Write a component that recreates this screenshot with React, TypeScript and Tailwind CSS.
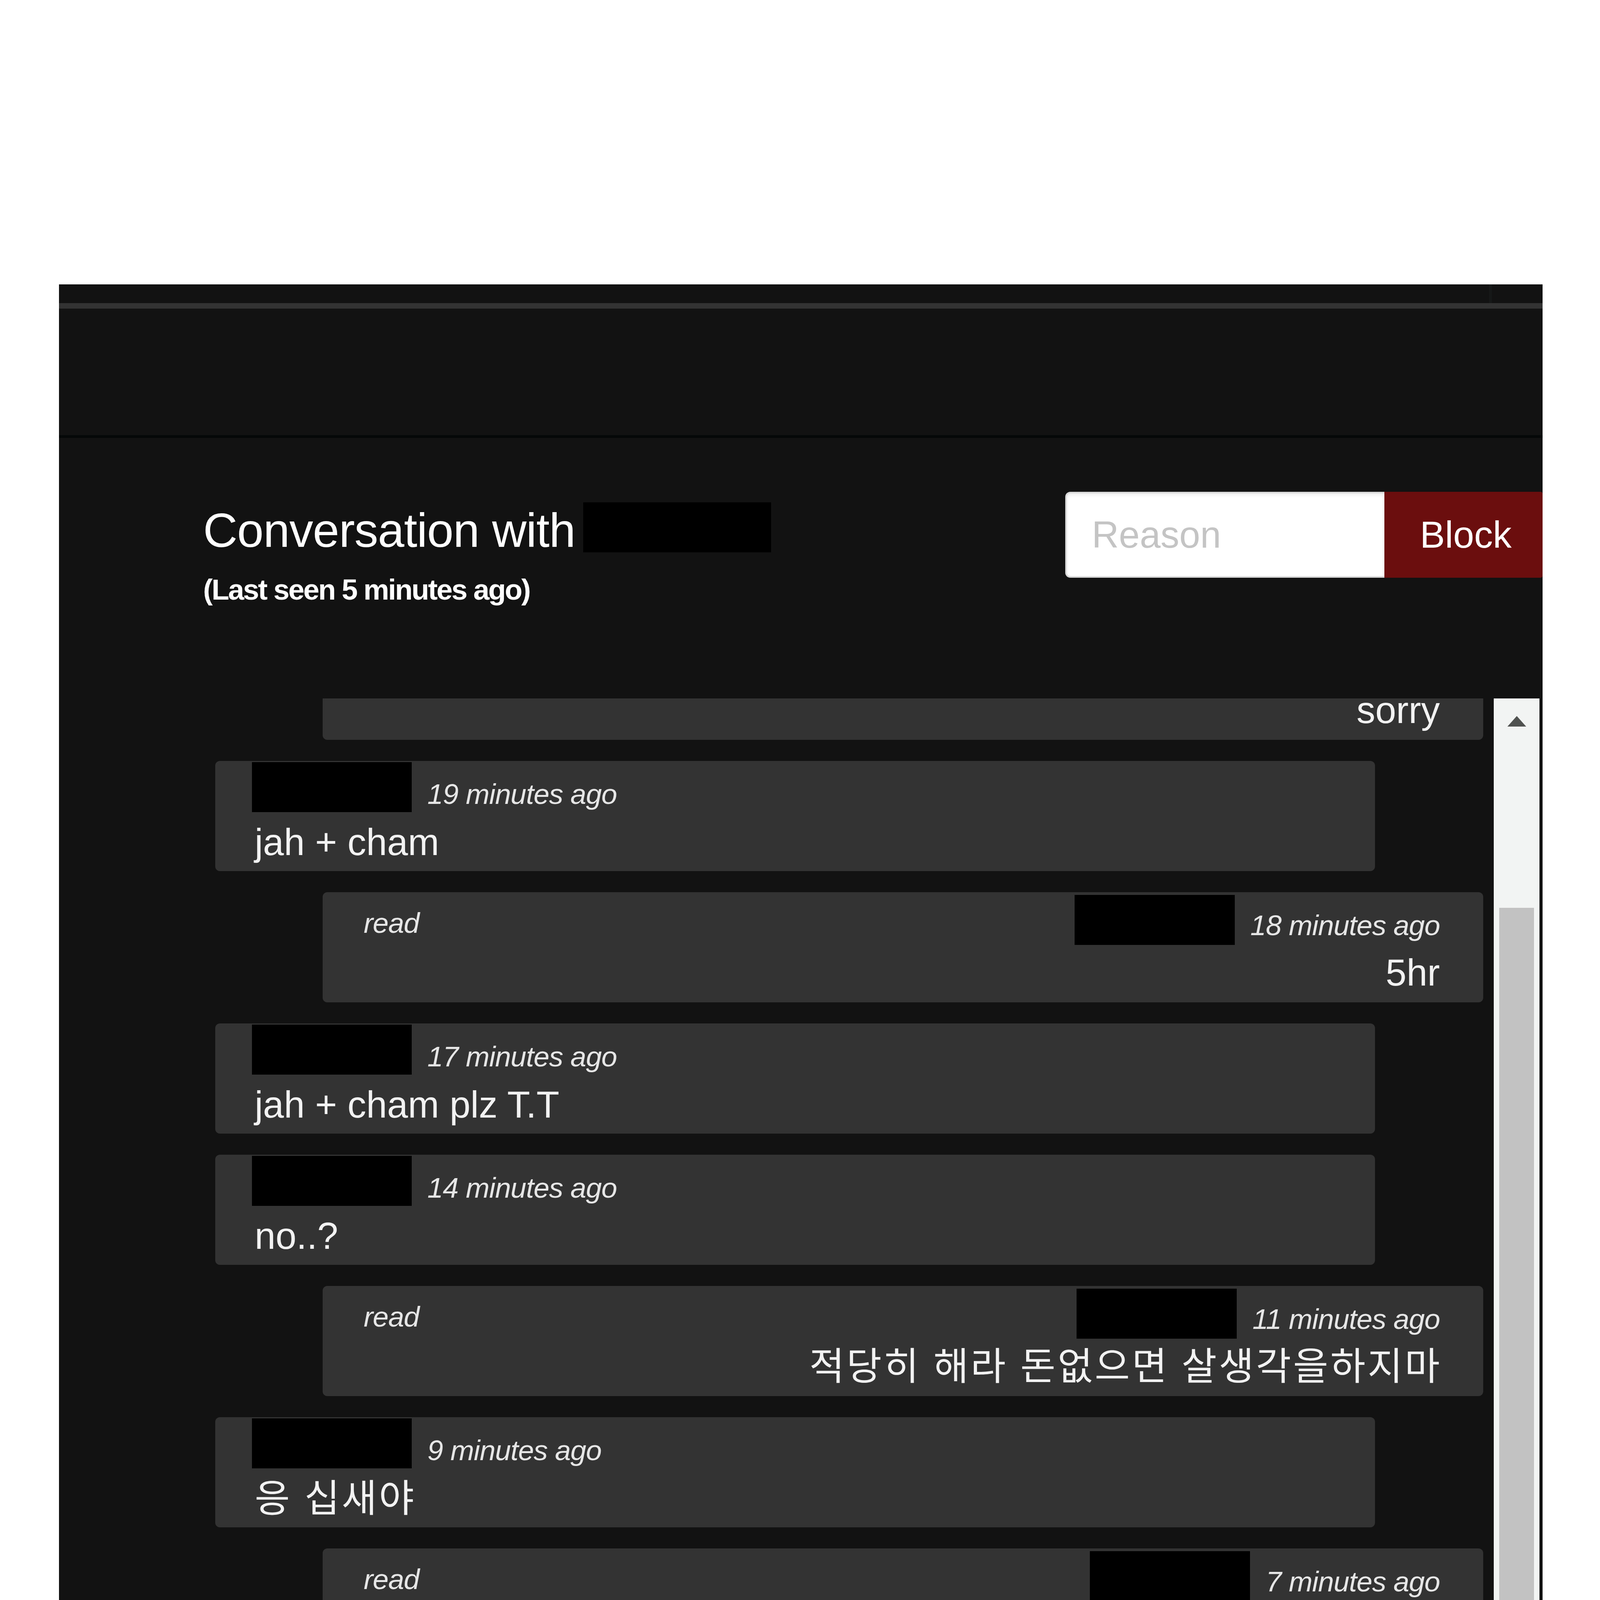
import clsx from 'clsx';

type Msg = {
  side: 'in' | 'out';
  time: string;
  text: string;
  ko?: boolean;
};

const messages: Msg[] = [
  { side: 'out', time: '20 minutes ago', text: 'sorry' },
  { side: 'in', time: '19 minutes ago', text: 'jah + cham' },
  { side: 'out', time: '18 minutes ago', text: '5hr' },
  { side: 'in', time: '17 minutes ago', text: 'jah + cham plz T.T' },
  { side: 'in', time: '14 minutes ago', text: 'no..?' },
  { side: 'out', time: '11 minutes ago', text: '적당히 해라 돈없으면 살생각을하지마', ko: true },
  { side: 'in', time: '9 minutes ago', text: '응 십새야', ko: true },
  { side: 'out', time: '7 minutes ago', text: '그지새끼가 염치가있어야지 ㅋㅋ 새해복은 많이받아라', ko: true },
  { side: 'in', time: '6 minutes ago', text: '응 느금마', ko: true },
  { side: 'in', time: '6 minutes ago', text: '너도 복많이받고 떡국은 챙겨먹어라', ko: true },
];

function Incoming({ m }: { m: Msg }) {
  return (
    <div className="shrink-0 mr-[277px] h-[282px] rounded-[12px] bg-[#333333] pl-[94px] pr-[100px] pt-[3px]">
      <div className="flex items-start">
        {/* redacted name */}
        <div className="w-[409px] h-[128px] bg-black" />
        <span className="ml-[40px] mt-[45px] text-[73px] leading-none italic tracking-[-1px] text-[#e6e6e6]">
          {m.time}
        </span>
      </div>
      <p
        className={clsx(
          'mt-[19px] pl-[7px] leading-[116px] text-[#f2f2f2] whitespace-nowrap',
          m.ko ? 'text-[98px] tracking-[5px]' : 'text-[96px]'
        )}
      >
        {m.text}
      </p>
    </div>
  );
}

function Outgoing({ m }: { m: Msg }) {
  return (
    <div className="shrink-0 ml-[275px] h-[282px] rounded-[12px] bg-[#333333] pl-[105px] pr-[111px] pt-[7px]">
      <div className="flex items-start">
        <span className="mt-[35px] text-[73px] leading-none italic tracking-[-1px] text-[#e6e6e6]">read</span>
        <div className="ml-auto w-[410px] h-[128px] bg-black" />
        <span className="ml-[40px] mt-[41px] text-[73px] leading-none italic tracking-[-1px] text-[#e6e6e6]">
          {m.time}
        </span>
      </div>
      <p
        className={clsx(
          'mt-[13px] text-right leading-[116px] text-[#f2f2f2] whitespace-nowrap',
          m.ko ? 'text-[98px] tracking-[5px] -mr-[5px]' : 'text-[96px]'
        )}
      >
        {m.text}
      </p>
    </div>
  );
}

function Scrollbar() {
  return (
    <div className="w-[117px] h-full flex flex-col bg-[#f2f4f3]">
      <div className="h-[117px] flex items-center justify-center">
        <svg width="48" height="27" viewBox="0 0 48 27">
          <polygon points="0,27 24,0 48,27" fill="#505250" />
        </svg>
      </div>
      <div className="flex-1 flex flex-col pt-[419px] pb-[7px] px-[14px]">
        <div className="flex-1 bg-[#c2c2c2]" />
      </div>
      <div className="h-[117px] flex items-center justify-center">
        <svg width="48" height="27" viewBox="0 0 48 27">
          <polygon points="0,0 48,0 24,27" fill="#505250" />
        </svg>
      </div>
    </div>
  );
}

export default function App() {
  return (
    <div className="w-full h-[5793px] bg-white pt-[728px] font-['Liberation_Sans','Noto_Sans_CJK_KR',sans-serif]">
      <div className="ml-[151px] w-[3798px] bg-[#121212]">
        {/* Top bar */}
        <div className="h-[48px] flex justify-end pr-[130px]">
          <div className="w-[7px] h-full bg-[#161818]" />
        </div>
        <div className="h-[14px] bg-[#333333]" />
        <div className="h-[324px]" />
        <div className="h-[7px] bg-[#050808]" />

        {/* Header */}
        <div className="h-[667px] flex items-start justify-between pl-[369px] pt-[138px]">
          <div className="mt-[27px]">
            <div className="flex items-center">
              <h1 className="text-[122px] leading-none font-normal tracking-[-1px] text-white">Conversation with</h1>
              <div className="ml-[20px] mb-[16px] w-[481px] h-[128px] bg-black" />
            </div>
            <p className="mt-[43px] text-[74px] leading-none font-bold tracking-[-2.9px] text-white">
              (Last seen 5 minutes ago)
            </p>
          </div>
          <div className="flex h-[220px]">
            <input
              placeholder="Reason"
              className="w-[817px] h-full bg-white border-[4px] border-r-0 border-[#dadada] rounded-l-[13px] shadow-[inset_0_5px_8px_rgba(0,0,0,0.07)] pl-[64px] text-[96px] text-[#555] placeholder:text-[#c4c4c4] outline-none"
            />
            <button className="h-full w-[405px] bg-[#6b0e0e] rounded-r-[5px] pl-[91px] pr-[70px] text-left text-[96px] leading-none text-white">
              Block
            </button>
          </div>
        </div>

        {/* Messages */}
        <div className="h-[3165px] flex">
          <div className="ml-[400px] w-[3246px] h-full overflow-hidden flex flex-col justify-end gap-[54px] pb-[35px]">
            {messages.map((m, i) =>
              m.side === 'in' ? <Incoming key={i} m={m} /> : <Outgoing key={i} m={m} />
            )}
          </div>
          <div className="ml-[27px] h-full">
            <Scrollbar />
          </div>
        </div>
        <div className="h-[116px]" />
      </div>
    </div>
  );
}
